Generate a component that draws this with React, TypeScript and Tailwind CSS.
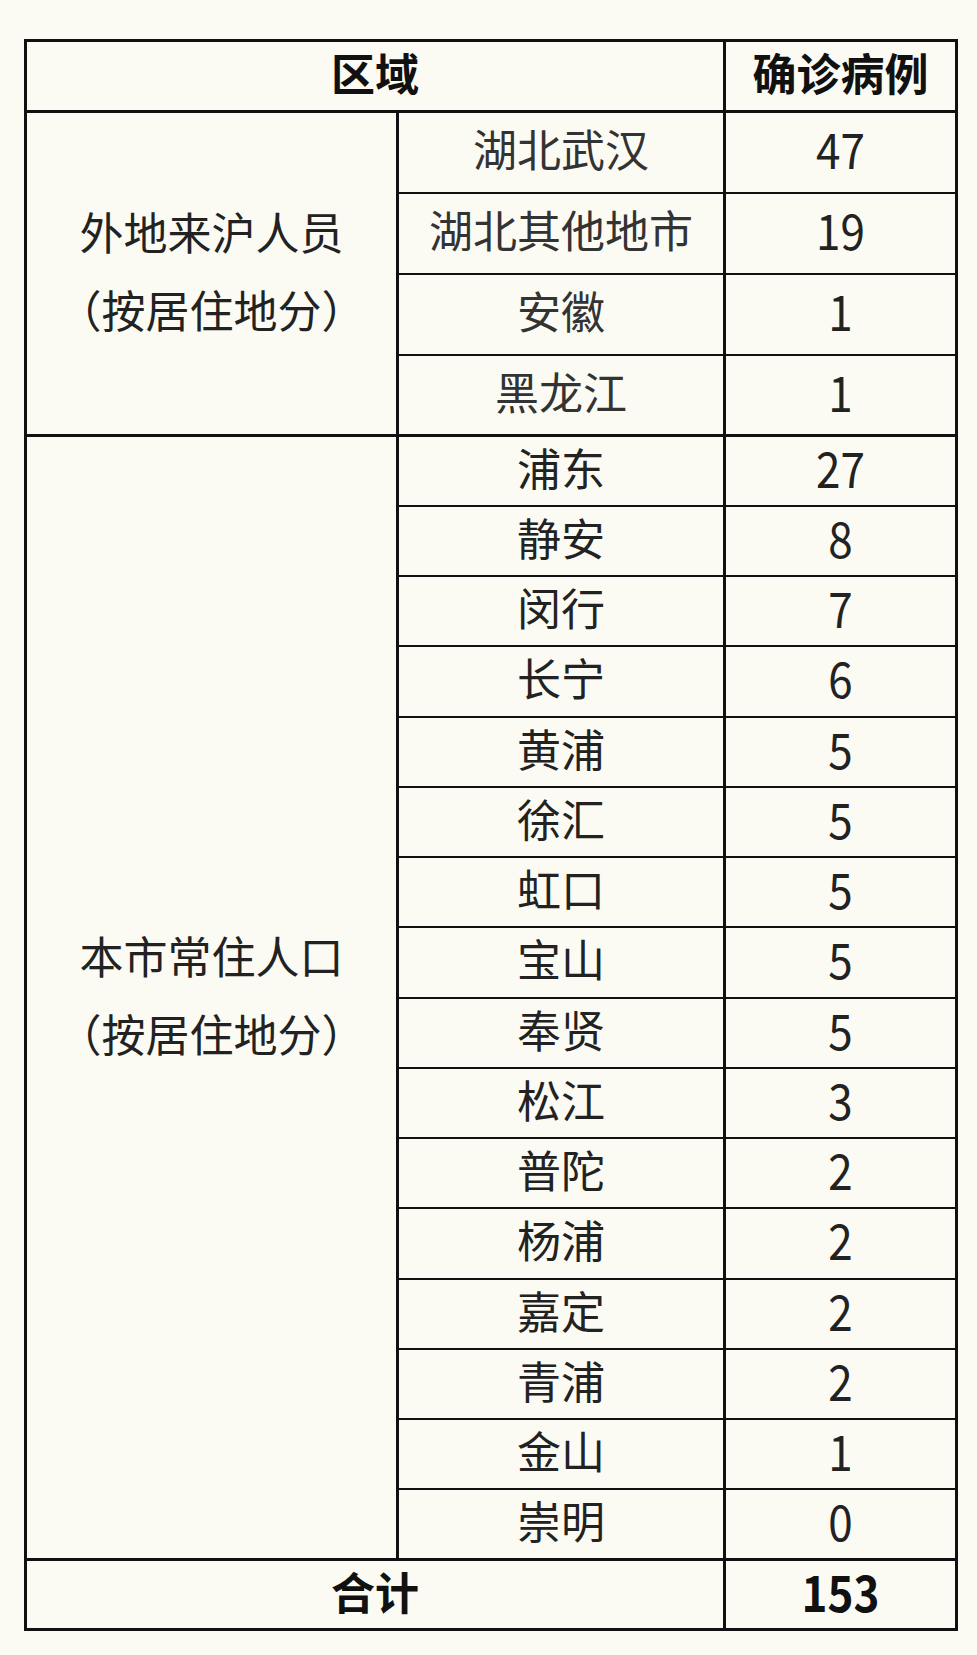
import React from 'react';

const outside = [
    { name: '湖北武汉', count: 47 },
    { name: '湖北其他地市', count: 19 },
    { name: '安徽', count: 1 },
    { name: '黑龙江', count: 1 },
];

const local = [
    { name: '浦东', count: 27 },
    { name: '静安', count: 8 },
    { name: '闵行', count: 7 },
    { name: '长宁', count: 6 },
    { name: '黄浦', count: 5 },
    { name: '徐汇', count: 5 },
    { name: '虹口', count: 5 },
    { name: '宝山', count: 5 },
    { name: '奉贤', count: 5 },
    { name: '松江', count: 3 },
    { name: '普陀', count: 2 },
    { name: '杨浦', count: 2 },
    { name: '嘉定', count: 2 },
    { name: '青浦', count: 2 },
    { name: '金山', count: 1 },
    { name: '崇明', count: 0 },
];

const font = { fontFamily: '"Noto Sans CJK SC", "Noto Sans", sans-serif' };

function Num({ value, bold = false }: { value: number; bold?: boolean }) {
    return (
        <span className={`inline-block scale-y-[1.12] ${bold ? 'font-bold' : ''}`}>{value}</span>
    );
}

function GroupLabel({ lines }: { lines: string[] }) {
    return (
        <div className="flex flex-col items-center leading-[78px]">
            {lines.map((l) => (
                <span key={l}>{l}</span>
            ))}
        </div>
    );
}

export default function App() {
    return (
        <main className="w-[977px] h-[1655px] bg-[#fbfbf3] pt-[39px] pl-[24px]" style={font}>
            <table className="table-fixed border-collapse border-[3px] border-[#111] text-[44px] text-[#222] leading-none">
                <colgroup>
                    <col className="w-[372px]" />
                    <col className="w-[327px]" />
                    <col className="w-[232px]" />
                </colgroup>
                <thead>
                    <tr className="h-[71px]">
                        <th colSpan={2} className="border-[3px] border-[#111] font-bold text-[#111] text-center align-middle pb-2">区域</th>
                        <th className="border-[3px] border-[#111] font-bold text-[#111] text-center align-middle pb-2">确诊病例</th>
                    </tr>
                </thead>
                <tbody>
                    {outside.map((row, i) => (
                        <tr key={row.name} className="h-[81px]">
                            {i === 0 && (
                                <td rowSpan={outside.length} className="border-[3px] border-[#111] text-center align-middle pb-2">
                                    <GroupLabel lines={['外地来沪人员', '（按居住地分）']} />
                                </td>
                            )}
                            <td className="border-2 border-[#111] border-l-[3px] text-center align-middle text-[#333] pb-2">{row.name}</td>
                            <td className="border-2 border-[#111] border-l-[3px] border-r-[3px] text-center align-middle pb-2">
                                <Num value={row.count} />
                            </td>
                        </tr>
                    ))}
                    {local.map((row, i) => (
                        <tr key={row.name} className={`h-[70.25px] ${i === 0 ? 'border-t-[3px] border-[#111]' : ''}`}>
                            {i === 0 && (
                                <td rowSpan={local.length} className="border-[3px] border-[#111] text-center align-middle pb-2">
                                    <GroupLabel lines={['本市常住人口', '（按居住地分）']} />
                                </td>
                            )}
                            <td className="border-2 border-[#111] border-l-[3px] text-center align-middle pb-2">{row.name}</td>
                            <td className="border-2 border-[#111] border-l-[3px] border-r-[3px] text-center align-middle pb-2">
                                <Num value={row.count} />
                            </td>
                        </tr>
                    ))}
                    <tr className="h-[70px] border-t-[3px] border-[#111]">
                        <td colSpan={2} className="border-[3px] border-[#111] font-bold text-[#111] text-center align-middle pb-2">合计</td>
                        <td className="border-[3px] border-[#111] text-[#111] text-center align-middle pb-2">
                            <Num value={153} bold />
                        </td>
                    </tr>
                </tbody>
            </table>
        </main>
    );
}
